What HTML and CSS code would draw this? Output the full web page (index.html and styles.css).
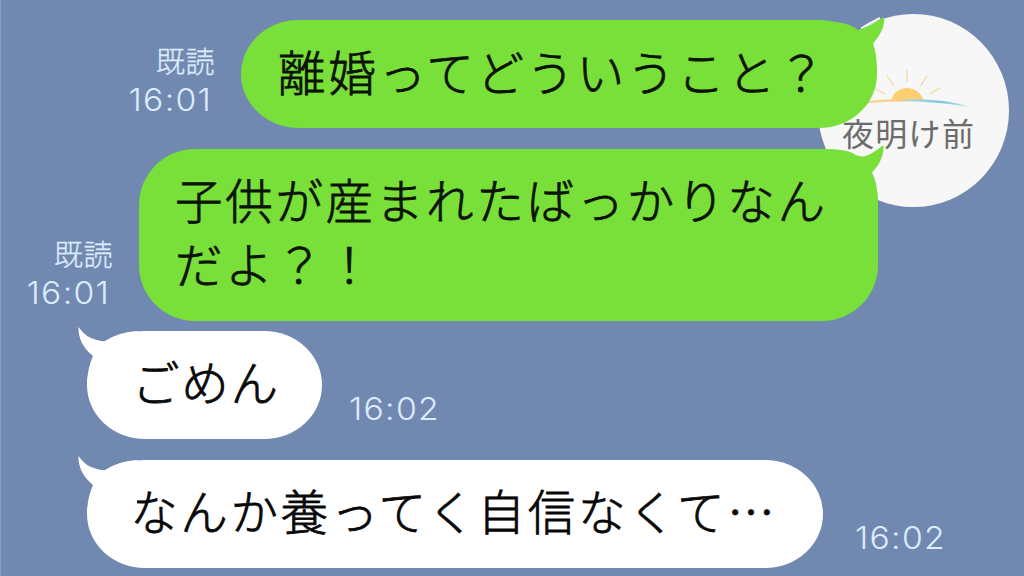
FILE: index.html
```html
<!DOCTYPE html>
<html lang="ja">
<head>
<meta charset="utf-8">
<title>トーク</title>
<link rel="stylesheet" href="styles.css">
</head>
<body>
<main class="chat">
  <div class="logo">
    <svg class="logo-sun" width="132" height="48" viewBox="0 0 132 48">
      <defs>
        <linearGradient id="horizon" gradientUnits="userSpaceOnUse" x1="0" x2="127" y1="0" y2="0">
          <stop offset="0" stop-color="#f9d9a8"/>
          <stop offset=".45" stop-color="#f8cd86"/>
          <stop offset=".58" stop-color="#a5d5dc"/>
          <stop offset=".8" stop-color="#83c5d8"/>
          <stop offset="1" stop-color="#c9e6ee"/>
        </linearGradient>
      </defs>
      <path d="M49 38C51 30 57 25 65 25S79 30 82 38Z" fill="#fbce70"/>
      <path d="M0 43C22 37 48 35.5 70 36C95 36.5 115 39 127 44C110 41 92 39 70 38.5C48 38 22 40 0 43Z" fill="url(#horizon)"/>
      <path d="M65 7V18.500M45 13L51.500 22.500M85 13L79 22.500M34 26L43 31M98 25L88 30.500" stroke="#f7d7a0" stroke-width="1.3" stroke-linecap="round" fill="none"/>
    </svg>
    <span class="logo-name">夜明け前</span>
  </div>

  <section class="message sent first">
    <div class="meta"><span class="read">既読</span><time class="time">16:01</time></div>
    <div class="bubble">
      <svg class="tail" width="40" height="60" viewBox="0 0 40 60"><path class="tail-edge" d="M10 13.500Q21 7 29 3"/><path d="M-14 7Q0 9 7 15Q20 11 33 2C34 10 31 18 22 28.500Q26 39 26 57H-14Z"/></svg>
      <p class="text">離婚ってどういうこと？</p>
    </div>
  </section>

  <section class="message sent second">
    <div class="meta"><span class="read">既読</span><time class="time">16:01</time></div>
    <div class="bubble">
      <svg class="tail" width="40" height="60" viewBox="0 0 40 60"><path d="M-28 5Q-4 5 3 10Q8 13 13 12.500Q20 11 32.500 1C33 10 30 19 21 28.500Q27 40 27 60H-28Z"/></svg>
      <p class="text">子供が産まれたばっかりなん<br>だよ？！</p>
    </div>
  </section>

  <section class="message received third">
    <div class="bubble">
      <svg class="tail" width="40" height="60" viewBox="0 0 40 60"><path d="M1.500 1Q9 12 20 14Q24 15.500 28 15Q42 6 60 5V58H10Q10.500 42 16 30Q1 18 1.500 1Z"/></svg>
      <p class="text">ごめん</p>
    </div>
    <div class="meta"><time class="time">16:02</time></div>
  </section>

  <section class="message received fourth">
    <div class="bubble">
      <svg class="tail" width="40" height="60" viewBox="0 0 40 60"><path d="M1.500 1Q9 12 20 14Q24 15.500 28 15Q42 6 60 5V58H10Q10.500 42 16 30Q1 18 1.500 1Z"/></svg>
      <p class="text">なんか養ってく自信なくて…</p>
    </div>
    <div class="meta"><time class="time">16:02</time></div>
  </section>
</main>
</body>
</html>
```
FILE: styles.css
```css
* {
  box-sizing: border-box;
}

body {
  margin: 0;
  background: #7189b0;
  font-family: "Noto Sans CJK JP", sans-serif;
}

.chat {
  position: relative;
  width: 1024px;
  height: 576px;
  padding-top: 20px;
  overflow: hidden;
  border-left: 1px solid #829dc6;
}

.message {
  position: relative;
  display: flex;
  align-items: flex-end;
}

.sent {
  justify-content: flex-end;
  padding-right: 146px;
}

.received {
  padding-left: 86px;
}

.first {
  margin-bottom: 21px;
  padding-right: 147px;
}

.first,
.third,
.fourth {
  height: 108px;
}

.second {
  height: 172px;
  margin-bottom: 10px;
}

.third {
  margin-bottom: 21px;
}

.bubble {
  position: relative;
  height: 100%;
  flex: none;
  border-radius: 58px / 54px;
}

.sent .bubble {
  background: #78e038;
}

.received .bubble {
  background: #fff;
}

.first .bubble {
  width: 636px;
  padding: 19px 0 0 37px;
}

.second .bubble {
  width: 739px;
  padding: 18px 0 0 36px;
  border-radius: 56px;
}

.third .bubble {
  width: 235px;
  padding: 18px 0 0 45px;
}

.fourth .bubble {
  width: 736px;
  padding: 18px 0 0 43px;
}

.text {
  margin: 0;
  font-size: 47.5px;
  font-weight: 300;
  line-height: 64px;
  letter-spacing: 2.7px;
  color: #0b1206;
  -webkit-text-stroke: 0.8px #0b1206;
  white-space: nowrap;
}

.third .text {
  letter-spacing: 1.7px;
}

.received .text {
  color: #080808;
  -webkit-text-stroke-color: #080808;
}

.tail {
  position: absolute;
  top: -5px;
  overflow: visible;
}

.sent .tail {
  right: -13px;
  fill: #78e038;
}

.first .tail {
  right: -14px;
}

.received .tail {
  left: -10px;
  fill: #fff;
}

.sent .tail-edge {
  fill: none;
  stroke: #f4f8f4;
  stroke-width: 2;
}

.meta {
  display: flex;
  flex-direction: column;
  align-items: flex-end;
  color: #dcecfc;
  font-weight: 300;
}

.sent .meta {
  padding: 0 26px 12px 0;
}

.received .meta {
  padding: 0 0 14px 27px;
}

.fourth .meta {
  padding-left: 32px;
}

.read {
  margin-bottom: 5px;
  font-size: 29px;
  line-height: 38px;
  letter-spacing: 0.5px;
  -webkit-text-stroke: 0.3px #dcecfc;
}

.time {
  font-family: Inter, "Liberation Sans", sans-serif;
  font-size: 31.5px;
  line-height: 32px;
  letter-spacing: 1.2px;
  transform: scaleX(1.07);
}

.sent .time {
  margin-right: 3px;
  transform-origin: right;
}

.received .time {
  transform-origin: left;
}

.logo {
  position: absolute;
  left: 817px;
  top: 14px;
  width: 191px;
  height: 193px;
  padding: 49px 0 0 24px;
  border-radius: 50%;
  background: #f6f7f6;
}

.logo-sun {
  display: block;
}

.logo-name {
  display: block;
  margin-top: 1px;
  font-size: 32px;
  line-height: 40px;
  letter-spacing: 1.3px;
  color: #6c6c6c;
  white-space: nowrap;
}
```
